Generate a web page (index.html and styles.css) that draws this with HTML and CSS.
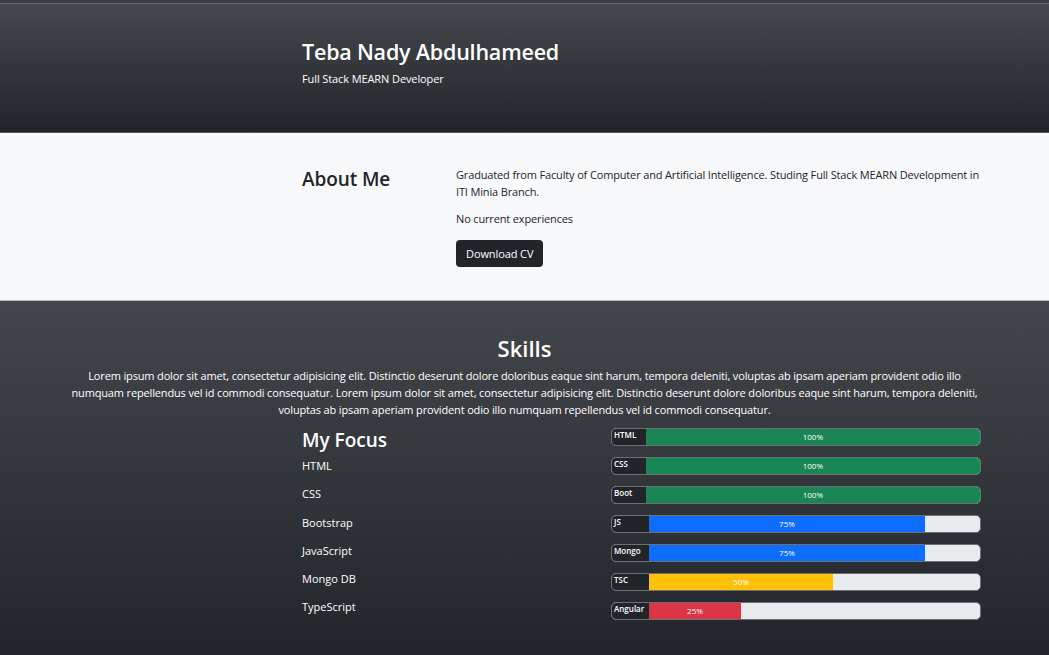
FILE: index.html
```html
<!DOCTYPE html>
<html lang="en">
<head>
<meta charset="utf-8">
<title>Teba Nady Abdulhameed</title>
<link rel="stylesheet" href="styles.css">
</head>
<body>
<div class="topstrip"></div>
<header class="hero">
  <div class="wrap">
    <h1 class="name">Teba Nady Abdulhameed</h1>
    <p class="role">Full Stack MEARN Developer</p>
  </div>
</header>

<section class="about">
  <div class="wrap about-row">
    <h2 class="about-title">About Me</h2>
    <div class="about-body">
      <p class="about-text">Graduated from Faculty of Computer and Artificial Intelligence. Studing Full Stack MEARN Development in ITI Minia Branch.</p>
      <p class="about-text">No current experiences</p>
      <button class="btn-dark" type="button">Download CV</button>
    </div>
  </div>
</section>

<section class="skills">
  <h2 class="skills-title">Skills</h2>
  <p class="skills-text">Lorem ipsum dolor sit amet, consectetur adipisicing elit. Distinctio deserunt dolore doloribus eaque sint harum, tempora deleniti, voluptas ab ipsam aperiam provident odio illo numquam repellendus vel id commodi consequatur. Lorem ipsum dolor sit amet, consectetur adipisicing elit. Distinctio deserunt dolore doloribus eaque sint harum, tempora deleniti, voluptas ab ipsam aperiam provident odio illo numquam repellendus vel id commodi consequatur.</p>
  <div class="wrap focus-row">
    <div class="focus-list">
      <h3 class="focus-title">My Focus</h3>
      <ul class="focus-items">
        <li>HTML</li>
        <li>CSS</li>
        <li>Bootstrap</li>
        <li>JavaScript</li>
        <li>Mongo DB</li>
        <li>TypeScript</li>
      </ul>
    </div>
    <div class="bars">
      <div class="bar"><span class="bar-label">HTML</span><span class="fill green" style="width:100%">100%</span></div>
      <div class="bar"><span class="bar-label">CSS</span><span class="fill green" style="width:100%">100%</span></div>
      <div class="bar"><span class="bar-label">Boot</span><span class="fill green" style="width:100%">100%</span></div>
      <div class="bar"><span class="bar-label">JS</span><span class="fill blue" style="width:75%">75%</span></div>
      <div class="bar"><span class="bar-label">Mongo</span><span class="fill blue" style="width:75%">75%</span></div>
      <div class="bar"><span class="bar-label">TSC</span><span class="fill yellow" style="width:50%">50%</span></div>
      <div class="bar"><span class="bar-label">Angular</span><span class="fill red" style="width:25%">25%</span></div>
    </div>
  </div>
</section>
</body>
</html>
```

FILE: styles.css
```css
* { box-sizing: border-box; }

html, body {
  margin: 0;
  padding: 0;
}

body {
  font-family: "Open Sans", "Noto Sans", "DejaVu Sans", sans-serif;
  color: #212529;
  background: #212529;
  overflow: hidden;
}

.topstrip {
  height: 3px;
  background: #3b3e42;
}

.wrap {
  margin-left: 302px;
  width: 679px;
}

/* header */
.hero {
  background: linear-gradient(180deg, #45484c 0%, #212529 100%);
  border-top: 1px solid #626568;
  border-bottom: 1px solid #5a5d60;
  height: 130px;
  padding-top: 33px;
  color: #fff;
}

.name {
  margin: 0;
  font-size: 21.5px;
  font-weight: 600;
  line-height: 29px;
  letter-spacing: -0.2px;
}

.role {
  margin: 4px 0 0;
  font-size: 11px;
  line-height: 17px;
  letter-spacing: -0.1px;
}

/* about */
.about {
  background: #f8f9fa;
  border-bottom: 1px solid #b9bcbf;
  height: 168px;
  padding-top: 33px;
}

.about-row {
  display: flex;
}

.about-title {
  margin: 0;
  width: 154px;
  flex: none;
  font-size: 19px;
  font-weight: 600;
  line-height: 26px;
  letter-spacing: -0.1px;
}

.about-body {
  flex: 1;
}

.about-text {
  margin: 0 0 10px;
  font-size: 11px;
  line-height: 17px;
  letter-spacing: -0.15px;
  color: #212529;
}

.btn-dark {
  display: inline-block;
  margin-top: 3px;
  height: 27px;
  padding: 0 10px;
  border: none;
  border-radius: 4px;
  background: #212529;
  color: #fff;
  font-family: inherit;
  font-size: 11px;
  letter-spacing: -0.1px;
}

/* skills */
.skills {
  background: linear-gradient(180deg, #43464a 0%, #212529 100%);
  height: 360px;
  padding-top: 33px;
  color: #fff;
}

.skills-title {
  margin: 0;
  text-align: center;
  font-size: 22px;
  font-weight: 600;
  line-height: 29px;
}

.skills-text {
  margin: 4px auto 0;
  width: 912px;
  text-align: center;
  font-size: 11px;
  line-height: 17px;
  letter-spacing: -0.15px;
}

.focus-row {
  display: flex;
  margin-top: 10px;
}

.focus-list {
  width: 309px;
  flex: none;
}

.focus-title {
  margin: 0;
  font-size: 19px;
  font-weight: 600;
  line-height: 24px;
}

.focus-items {
  list-style: none;
  margin: 5px 0 0;
  padding: 0;
}

.focus-items li {
  font-size: 11px;
  line-height: 17px;
  margin-bottom: 11.3px;
}

.bars {
  width: 370px;
  flex: none;
}

.bar {
  display: flex;
  height: 18px;
  margin-bottom: 11px;
  border: 1px solid #6c7075;
  border-radius: 5px;
  background: #e9ecef;
  overflow: hidden;
}

.bar-label {
  width: 37px;
  background: #212529;
  color: #fff;
  font-size: 8px;
  font-weight: 600;
  line-height: 10px;
  padding: 1px 0 0 2px;
  white-space: nowrap;
  overflow: hidden;
}

.fill {
  display: flex;
  align-items: center;
  justify-content: center;
  color: #fff;
  font-size: 8px;
  line-height: 10px;
}

.green { background: #198754; }
.blue { background: #0d6efd; }
.yellow { background: #ffc107; }
.red { background: #dc3545; }
```
